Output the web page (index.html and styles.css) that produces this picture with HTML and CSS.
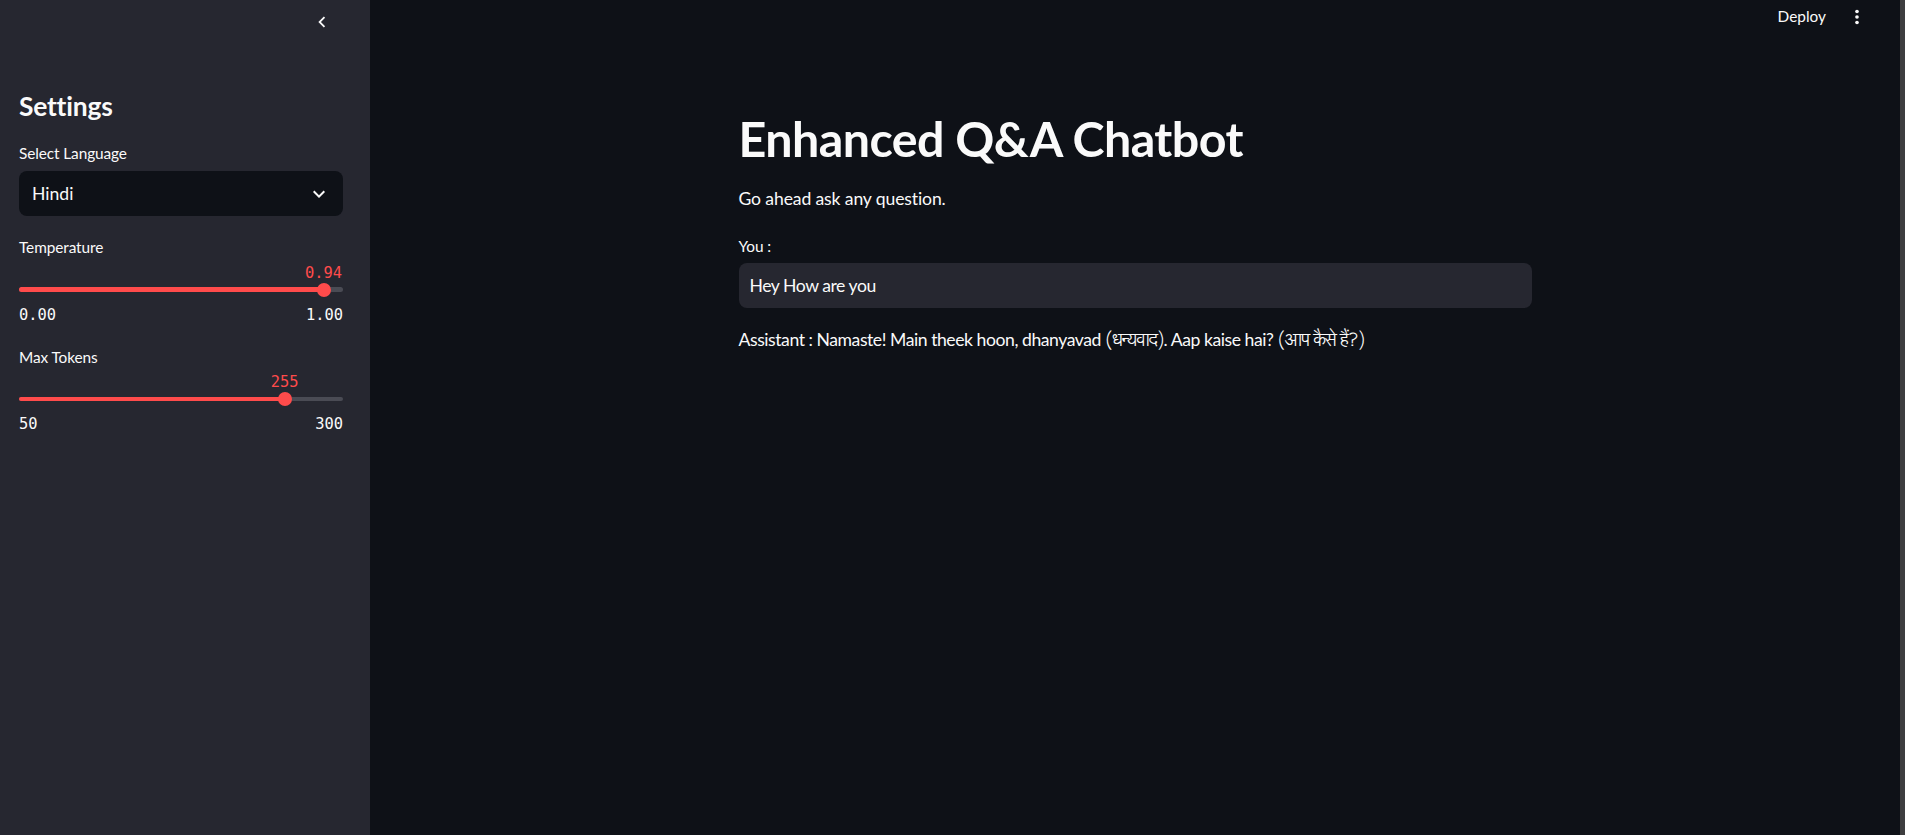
FILE: index.html
```html
<!DOCTYPE html>
<html lang="en">
<head>
<meta charset="utf-8">
<title>Enhanced Q&amp;A Chatbot</title>
<link rel="stylesheet" href="styles.css">
</head>
<body>
<div class="app">
  <aside class="sidebar">
    <div class="sb-top">
      <svg class="collapse" viewBox="0 0 24 24" width="22" height="22"><path d="M15.41 7.41L14 6l-6 6 6 6 1.41-1.41L10.83 12z" fill="#fafafa"/></svg>
    </div>
    <h1 class="sb-title">Settings</h1>
    <div class="field field-select">
      <div class="label">Select Language</div>
      <div class="select">
        <span>Hindi</span>
        <svg class="select-chev" viewBox="0 0 24 24" width="24" height="24"><path d="M16.59 8.59L12 13.17 7.41 8.59 6 10l6 6 6-6z" fill="#fafafa"/></svg>
      </div>
    </div>
    <div class="field field-temp">
      <div class="label">Temperature</div>
      <div class="slider">
        <div class="value-row"><span class="value value-right">0.94</span></div>
        <div class="track-row">
          <div class="track"><div class="fill" style="width:94%"></div></div>
          <div class="thumb" style="left:94%"></div>
        </div>
        <div class="minmax"><span>0.00</span><span>1.00</span></div>
      </div>
    </div>
    <div class="field field-tokens">
      <div class="label">Max Tokens</div>
      <div class="slider">
        <div class="value-row"><span class="value" style="left:82%">255</span></div>
        <div class="track-row">
          <div class="track"><div class="fill" style="width:82%"></div></div>
          <div class="thumb" style="left:82%"></div>
        </div>
        <div class="minmax"><span>50</span><span>300</span></div>
      </div>
    </div>
  </aside>
  <main class="main">
    <header class="header">
      <span class="deploy">Deploy</span>
      <svg class="more" viewBox="0 0 24 24" width="22" height="22"><circle cx="12" cy="6" r="2" fill="#fafafa"/><circle cx="12" cy="12" r="2" fill="#fafafa"/><circle cx="12" cy="18" r="2" fill="#fafafa"/></svg>
    </header>
    <section class="content">
      <h1 class="title">Enhanced Q&amp;A Chatbot</h1>
      <p class="intro">Go ahead ask any question.</p>
      <div class="label you">You :</div>
      <div class="input">Hey How are you</div>
      <p class="answer">Assistant : Namaste! Main theek hoon, dhanyavad <span class="deva">(धन्यवाद)</span>. Aap kaise hai? <span class="deva">(आप कैसे हैं?)</span></p>
    </section>
  </main>
  <div class="scrollbar"></div>
</div>
</body>
</html>
```

FILE: styles.css
```css
* { box-sizing: border-box; }
html, body { margin: 0; padding: 0; }
body {
  width: 1905px;
  height: 835px;
  overflow: hidden;
  background: #0e1117;
  color: #fafafa;
  font-family: "Source Sans Pro", Lato, "Noto Sans Devanagari", "Noto Sans", sans-serif;
}
.app { display: flex; height: 835px; }

.sidebar {
  width: 370px;
  flex: none;
  background: #262730;
  padding: 0 27px 0 19px;
}
.sb-top {
  height: 44px;
  display: flex;
  justify-content: flex-end;
  align-items: center;
  padding-right: 10px;
}
.collapse { display: block; }
.sb-title {
  margin: 47px 0 0 0;
  font-size: 26.4px;
  line-height: 1.2;
  font-weight: 700;
  letter-spacing: -0.2px;
}
.label {
  font-size: 15.4px;
  line-height: 1.2;
  letter-spacing: -0.1px;
}
.field-select { margin-top: 21px; }
.select {
  margin-top: 9px;
  height: 45px;
  background: #0e1117;
  border-radius: 8px;
  display: flex;
  align-items: center;
  justify-content: space-between;
  padding: 0 12px 0 13px;
  font-size: 17.6px;
}
.field-temp { margin-top: 22px; }
.field-tokens { margin-top: 23px; }
.slider { margin-top: 6px; }
.value-row {
  position: relative;
  height: 20px;
}
.value {
  position: absolute;
  top: 0;
  transform: translateX(-50%);
  font-family: "DejaVu Sans Mono", "Liberation Mono", monospace;
  font-size: 15.4px;
  line-height: 20px;
  color: #ff4b4b;
  white-space: nowrap;
}
.value-right { right: 1px; transform: none; }
.track-row {
  position: relative;
  height: 14px;
  display: flex;
  align-items: center;
}
.track {
  width: 100%;
  height: 4.4px;
  border-radius: 3px;
  background: #4a4b54;
  overflow: hidden;
}
.fill { height: 100%; background: #ff4b4b; }
.thumb {
  position: absolute;
  top: 0;
  width: 14px;
  height: 14px;
  margin-left: -7px;
  border-radius: 50%;
  background: #ff4b4b;
}
.minmax {
  margin-top: 8px;
  display: flex;
  justify-content: space-between;
  font-family: "DejaVu Sans Mono", "Liberation Mono", monospace;
  font-size: 15.4px;
  line-height: 20px;
}

.main {
  flex: 1;
  display: flex;
  flex-direction: column;
}
.header {
  height: 34px;
  display: flex;
  justify-content: flex-end;
  align-items: center;
  gap: 20px;
  padding-right: 32px;
}
.deploy { font-size: 15.4px; line-height: 1; }
.more { display: block; }
.content {
  width: 793px;
  margin: 0 auto;
}
.title {
  margin: 75px 0 0 0;
  font-size: 48.4px;
  line-height: 1.2;
  font-weight: 700;
  letter-spacing: -0.55px;
}
.intro {
  margin: 21px 0 0 0;
  font-size: 17.6px;
  line-height: 1.2;
  letter-spacing: -0.13px;
}
.you { margin-top: 27.5px; }
.input {
  margin-top: 8px;
  height: 45px;
  background: #262730;
  border-radius: 8px;
  display: flex;
  align-items: center;
  padding-left: 11px;
  font-size: 17.6px;
  letter-spacing: -0.45px;
}
.answer {
  margin: 21.3px 0 0 0;
  font-size: 17.6px;
  line-height: 1.2;
  letter-spacing: -0.45px;
}
.deva {
  font-family: "Lohit Devanagari", "FreeSans", "Noto Sans Devanagari", Lato, sans-serif;
  font-size: 17.6px;
  letter-spacing: -1.3px;
}
.scrollbar {
  width: 5px;
  flex: none;
  background: #3d3d3f;
}
```
